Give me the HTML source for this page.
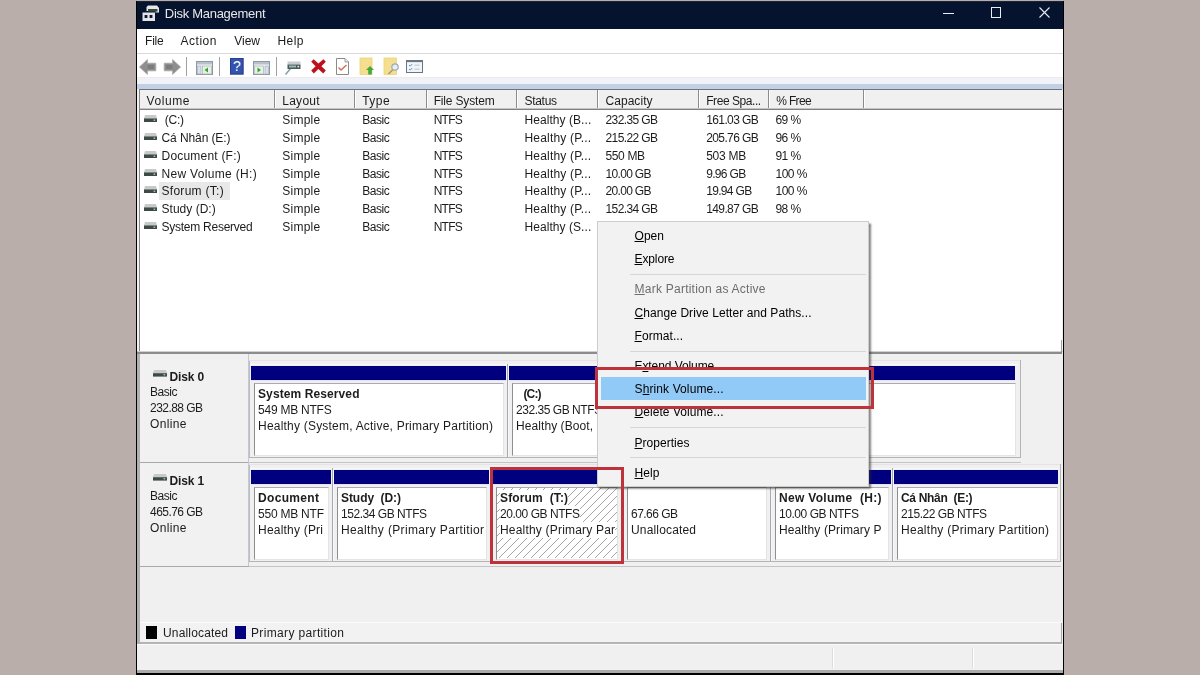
<!DOCTYPE html>
<html><head><meta charset="utf-8"><title>Disk Management</title>
<style>
html,body{margin:0;padding:0;}
body{width:1200px;height:675px;overflow:hidden;background:#b9aeaa;position:relative;font-family:"Liberation Sans",sans-serif;}
.r{position:absolute;}
.tx{position:absolute;left:0;top:0;width:1200px;height:675px;filter:grayscale(1);}
.t{position:absolute;white-space:pre;line-height:16px;height:16px;font-size:12px;color:#1c1c1c;}
.t u{text-decoration:underline;text-decoration-thickness:1px;text-underline-offset:1px;}
svg{position:absolute;overflow:visible;}
</style></head><body>

<div class="r" style="left:136px;top:1px;width:928px;height:674px;background:#000000;"></div>
<div class="r" style="left:137px;top:2px;width:926px;height:27px;background:#05132f;"></div>
<div class="r" style="left:137px;top:1px;width:926px;height:1px;background:#1a2438;"></div>
<div class="r" style="left:137px;top:29px;width:926px;height:24px;background:#ffffff;"></div>
<div class="r" style="left:137px;top:53px;width:926px;height:1px;background:#d9d9d9;"></div>
<div class="r" style="left:137px;top:54px;width:926px;height:24px;background:#ffffff;"></div>
<div class="r" style="left:137px;top:77px;width:926px;height:1px;background:#ececec;"></div>
<div class="r" style="left:137px;top:78px;width:926px;height:6px;background:#f0f2f7;"></div>
<div class="r" style="left:137px;top:84px;width:926px;height:5px;background:#c2d0e4;"></div>
<div class="r" style="left:137px;top:89px;width:926px;height:584px;background:#f0f0f0;"></div>
<svg style="left:142px;top:5px" width="17" height="16" viewBox="0 0 17 16">
<path d="M6 0.5h9l2 2.5v4.5h-3.5v-1.5H4.5V2z" fill="#e4e6e8"/>
<rect x="6" y="4" width="9.5" height="2.6" fill="#36463a"/>
<rect x="0.5" y="7.5" width="12.5" height="8.5" fill="#e2e4e6"/>
<rect x="2.6" y="10" width="2.8" height="3" fill="#0c1836"/>
<rect x="7.6" y="10" width="2.8" height="3" fill="#0c1836"/>
</svg>
<div class="r" style="left:943px;top:13px;width:11px;height:1px;background:#e8ecf4;"></div>
<div class="r" style="left:990.5px;top:7.2px;width:10.5px;height:10.5px;background:transparent;border:1px solid #e8ecf4;box-sizing:border-box;"></div>
<svg style="left:1039px;top:7px" width="11" height="11" viewBox="0 0 11 11"><path d="M0.5 0.5L10.5 10.5M10.5 0.5L0.5 10.5" stroke="#e8ecf4" stroke-width="1.1" fill="none"/></svg>
<svg style="left:139px;top:59px" width="18" height="16" viewBox="0 0 18 16">
<path d="M0.4 8L8.4 0.6V4.2h8.4v7.6H8.4v3.6z" fill="#8e8e8e" stroke="#a8a8a8" stroke-width="0.8"/><path d="M8.6 6h6.4v4H8.6z" fill="#7c7c7c"/></svg>
<svg style="left:163px;top:59px" width="18" height="16" viewBox="0 0 18 16">
<path d="M17.6 8L9.6 0.6V4.2H1.2v7.6h8.4v3.6z" fill="#8e8e8e" stroke="#a8a8a8" stroke-width="0.8"/><path d="M3 6h6.4v4H3z" fill="#7c7c7c"/></svg>
<div class="r" style="left:186px;top:57px;width:1px;height:19px;background:#a0a0a0;"></div>
<div class="r" style="left:219px;top:57px;width:1px;height:19px;background:#a0a0a0;"></div>
<div class="r" style="left:276px;top:57px;width:1px;height:19px;background:#a0a0a0;"></div>
<svg style="left:196px;top:61px" width="17" height="14" viewBox="0 0 17 14">
<rect x="0.5" y="0.5" width="16" height="13" fill="#f4f6f8" stroke="#8e98a4"/>
<rect x="1" y="1" width="15" height="2.5" fill="#b8c0cc"/>
<rect x="1.5" y="5" width="3.5" height="8" fill="#d8e0ea" stroke="#9aa6b4" stroke-width="0.6"/>
<rect x="6.5" y="5" width="9" height="8" fill="#e6f2e2" stroke="#9aa6b4" stroke-width="0.6"/>
<path d="M12 6.5v5L8.5 9z" fill="#3aa035"/></svg>
<svg style="left:230px;top:58px" width="14" height="17" viewBox="0 0 14 17">
<rect x="0" y="0" width="13.5" height="16.5" fill="#3453ae"/>
<rect x="0.5" y="0.5" width="12.5" height="15.5" fill="none" stroke="#27408c" stroke-width="1"/>
<text x="6.8" y="13.2" font-family="Liberation Sans" font-size="14" fill="#fff" text-anchor="middle">?</text></svg>
<svg style="left:253px;top:61px" width="17" height="14" viewBox="0 0 17 14">
<rect x="0.5" y="0.5" width="16" height="13" fill="#f4f6f8" stroke="#8e98a4"/>
<rect x="1" y="1" width="15" height="2.5" fill="#b8c0cc"/>
<rect x="1.5" y="5" width="9" height="8" fill="#e6f2e2" stroke="#9aa6b4" stroke-width="0.6"/>
<rect x="12" y="5" width="3.5" height="8" fill="#d8e0ea" stroke="#9aa6b4" stroke-width="0.6"/>
<path d="M4.5 6.5v5L8 9z" fill="#3aa035"/></svg>
<svg style="left:285px;top:60px" width="16" height="15" viewBox="0 0 16 15">
<path d="M0.5 14.5L6 8" stroke="#8aa0b0" stroke-width="1.6" fill="none"/>
<rect x="2.5" y="1.5" width="13" height="3" fill="#c8ccd0"/>
<rect x="2.5" y="4.5" width="13" height="4.5" fill="#4a5a58"/>
<rect x="4" y="5.5" width="7" height="2" fill="#9ab8b0"/>
<rect x="12.5" y="5.8" width="1.6" height="1.6" fill="#e8f0e8"/></svg>
<svg style="left:310.5px;top:59px" width="15" height="15" viewBox="0 0 15 15">
<path d="M2.6 0.2L7.4 4.4L12.4 0.2L14.8 2.8L10.4 7.2L14.8 11.6L12.2 14.4L7.4 10L2.8 14.4L0.2 11.6L4.6 7.2L0.2 2.8z" fill="#bc121c"/></svg>
<svg style="left:336px;top:58px" width="13" height="17" viewBox="0 0 13 17">
<path d="M0.5 0.5h8.5l3.5 3.5v12.5h-12z" fill="#fff" stroke="#8a8a8a"/>
<path d="M9 0.5v3.5h3.5" fill="#e8e8e8" stroke="#8a8a8a" stroke-width="0.8"/>
<path d="M2.5 9.5l2.5 2.5l5.5-5" fill="none" stroke="#d66a50" stroke-width="1.4"/></svg>
<svg style="left:360px;top:58px" width="14" height="17" viewBox="0 0 14 17">
<rect x="0" y="0" width="12" height="16.5" fill="#f5df8e"/>
<rect x="0" y="0" width="12" height="16.5" fill="none" stroke="#ecd27a" stroke-width="0.8"/>
<path d="M10 8l4 4h-2.2v4.5h-3.6V12H6z" fill="#46a83c"/></svg>
<svg style="left:384px;top:58px" width="15" height="17" viewBox="0 0 15 17">
<rect x="0" y="0" width="12.5" height="16.5" fill="#f5df8e"/>
<rect x="0" y="0" width="12.5" height="16.5" fill="none" stroke="#ecd27a" stroke-width="0.8"/>
<path d="M4.5 16l4.5-4.5" stroke="#a89878" stroke-width="1.6"/>
<circle cx="11" cy="9" r="3.2" fill="#e4eef4" stroke="#9aa8b0" stroke-width="1.2"/></svg>
<svg style="left:406px;top:60px" width="17" height="13" viewBox="0 0 17 13">
<rect x="0.5" y="0.5" width="16" height="12" fill="#f2f5f8" stroke="#6a7684"/>
<rect x="0.5" y="0.5" width="16" height="1.6" fill="#6a7684"/>
<path d="M3 5l1.2 1.2L6.2 4M3 9l1.2 1.2L6.2 8" stroke="#6a94c0" stroke-width="1" fill="none"/>
<path d="M8.5 5.2h5M8.5 9.2h5" stroke="#b8c4d0" stroke-width="1"/></svg>
<div class="r" style="left:139px;top:89px;width:923px;height:1px;background:#6e7484;"></div>
<div class="r" style="left:139px;top:90px;width:1px;height:262px;background:#8a8a8a;"></div>
<div class="r" style="left:140px;top:90px;width:922px;height:261px;background:#ffffff;"></div>
<div class="r" style="left:140px;top:90px;width:922px;height:19px;background:#f0f0f0;"></div>
<div class="r" style="left:140px;top:109px;width:922px;height:1px;background:#808080;"></div>
<div class="r" style="left:140px;top:108px;width:922px;height:1px;background:#c4c4c4;"></div>
<div class="r" style="left:274px;top:90px;width:1px;height:18px;background:#8c8c8c;"></div>
<div class="r" style="left:275px;top:90px;width:1px;height:18px;background:#ffffff;"></div>
<div class="r" style="left:354px;top:90px;width:1px;height:18px;background:#8c8c8c;"></div>
<div class="r" style="left:355px;top:90px;width:1px;height:18px;background:#ffffff;"></div>
<div class="r" style="left:426px;top:90px;width:1px;height:18px;background:#8c8c8c;"></div>
<div class="r" style="left:427px;top:90px;width:1px;height:18px;background:#ffffff;"></div>
<div class="r" style="left:516px;top:90px;width:1px;height:18px;background:#8c8c8c;"></div>
<div class="r" style="left:517px;top:90px;width:1px;height:18px;background:#ffffff;"></div>
<div class="r" style="left:597px;top:90px;width:1px;height:18px;background:#8c8c8c;"></div>
<div class="r" style="left:598px;top:90px;width:1px;height:18px;background:#ffffff;"></div>
<div class="r" style="left:698px;top:90px;width:1px;height:18px;background:#8c8c8c;"></div>
<div class="r" style="left:699px;top:90px;width:1px;height:18px;background:#ffffff;"></div>
<div class="r" style="left:768px;top:90px;width:1px;height:18px;background:#8c8c8c;"></div>
<div class="r" style="left:769px;top:90px;width:1px;height:18px;background:#ffffff;"></div>
<div class="r" style="left:863px;top:90px;width:1px;height:18px;background:#8c8c8c;"></div>
<div class="r" style="left:864px;top:90px;width:1px;height:18px;background:#ffffff;"></div>
<div class="r" style="left:159px;top:182px;width:70.5px;height:17.5px;background:#e8e8e8;"></div>
<svg style="left:144px;top:115.00px" width="13" height="7" viewBox="0 0 13 7"><path d="M1 0h11l1 3.4H0z" fill="#c6caca"/><rect x="0" y="3.4" width="13" height="3.6" fill="#3e4a46"/><rect x="9.6" y="4.6" width="1.6" height="1.2" fill="#b8e0b8"/></svg>
<svg style="left:144px;top:133.00px" width="13" height="7" viewBox="0 0 13 7"><path d="M1 0h11l1 3.4H0z" fill="#c6caca"/><rect x="0" y="3.4" width="13" height="3.6" fill="#3e4a46"/><rect x="9.6" y="4.6" width="1.6" height="1.2" fill="#b8e0b8"/></svg>
<svg style="left:144px;top:151.00px" width="13" height="7" viewBox="0 0 13 7"><path d="M1 0h11l1 3.4H0z" fill="#c6caca"/><rect x="0" y="3.4" width="13" height="3.6" fill="#3e4a46"/><rect x="9.6" y="4.6" width="1.6" height="1.2" fill="#b8e0b8"/></svg>
<svg style="left:144px;top:169.00px" width="13" height="7" viewBox="0 0 13 7"><path d="M1 0h11l1 3.4H0z" fill="#c6caca"/><rect x="0" y="3.4" width="13" height="3.6" fill="#3e4a46"/><rect x="9.6" y="4.6" width="1.6" height="1.2" fill="#b8e0b8"/></svg>
<svg style="left:144px;top:186.00px" width="13" height="7" viewBox="0 0 13 7"><path d="M1 0h11l1 3.4H0z" fill="#c6caca"/><rect x="0" y="3.4" width="13" height="3.6" fill="#3e4a46"/><rect x="9.6" y="4.6" width="1.6" height="1.2" fill="#b8e0b8"/></svg>
<svg style="left:144px;top:204.00px" width="13" height="7" viewBox="0 0 13 7"><path d="M1 0h11l1 3.4H0z" fill="#c6caca"/><rect x="0" y="3.4" width="13" height="3.6" fill="#3e4a46"/><rect x="9.6" y="4.6" width="1.6" height="1.2" fill="#b8e0b8"/></svg>
<svg style="left:144px;top:222.00px" width="13" height="7" viewBox="0 0 13 7"><path d="M1 0h11l1 3.4H0z" fill="#c6caca"/><rect x="0" y="3.4" width="13" height="3.6" fill="#3e4a46"/><rect x="9.6" y="4.6" width="1.6" height="1.2" fill="#b8e0b8"/></svg>
<div class="r" style="left:137px;top:351px;width:926px;height:1px;background:#d0d0d0;"></div>
<div class="r" style="left:137px;top:352px;width:925px;height:1.5px;background:#8c8c8c;"></div>
<div class="r" style="left:1061px;top:340px;width:1px;height:12px;background:#a0a0a0;"></div>
<div class="r" style="left:140px;top:359px;width:108px;height:103px;background:#f1f1f1;"></div>
<div class="r" style="left:248px;top:354px;width:1px;height:108px;background:#c8c8c8;"></div>
<div class="r" style="left:140px;top:462px;width:109px;height:1px;background:#a8a8a8;"></div>
<div class="r" style="left:249px;top:462px;width:772px;height:1px;background:#c4c4c4;"></div>
<svg style="left:153px;top:369.8px" width="14" height="7" viewBox="0 0 14 7"><path d="M1 0h12l1 3.2H0z" fill="#c6caca"/><rect x="0" y="3.2" width="14" height="3.4" fill="#3e4a46"/><rect x="10.6" y="4.2" width="1.6" height="1.2" fill="#b8e0b8"/></svg>
<div class="r" style="left:249px;top:360px;width:1px;height:98px;background:#b8bcd0;"></div>
<div class="r" style="left:249px;top:360px;width:771px;height:1px;background:#e4e4e8;"></div>
<div class="r" style="left:250px;top:364px;width:768px;height:1px;background:#f8f8ff;"></div>
<div class="r" style="left:249px;top:457px;width:772px;height:1px;background:#b4b4b4;"></div>
<div class="r" style="left:1020px;top:360px;width:1px;height:98px;background:#b4b4b4;"></div>
<div class="r" style="left:251px;top:366px;width:255px;height:13.5px;background:#00007e;"></div>
<div class="r" style="left:251px;top:379.5px;width:255px;height:1px;background:#e2e2f4;"></div>
<div class="r" style="left:254px;top:383px;width:250px;height:73px;background:#fff;border-left:1px solid #8e8e8e;border-top:1px solid #ababab;border-right:1px solid #e4e4e4;border-bottom:1px solid #e4e4e4;box-sizing:border-box;"></div>
<div class="r" style="left:507px;top:364px;width:1px;height:93px;background:#a8a8b4;"></div>
<div class="r" style="left:508px;top:364px;width:1px;height:93px;background:#f6f6fc;"></div>
<div class="r" style="left:509px;top:366px;width:506px;height:13.5px;background:#00007e;"></div>
<div class="r" style="left:509px;top:379.5px;width:506px;height:1px;background:#e2e2f4;"></div>
<div class="r" style="left:512px;top:383px;width:504px;height:73px;background:#fff;border-left:1px solid #8e8e8e;border-top:1px solid #ababab;border-right:1px solid #e4e4e4;border-bottom:1px solid #e4e4e4;box-sizing:border-box;"></div>
<div class="r" style="left:140px;top:463px;width:108px;height:103px;background:#f1f1f1;"></div>
<div class="r" style="left:248px;top:458px;width:1px;height:108px;background:#c8c8c8;"></div>
<div class="r" style="left:140px;top:566px;width:109px;height:1px;background:#a8a8a8;"></div>
<div class="r" style="left:249px;top:566px;width:812px;height:1px;background:#c4c4c4;"></div>
<svg style="left:153px;top:473.8px" width="14" height="7" viewBox="0 0 14 7"><path d="M1 0h12l1 3.2H0z" fill="#c6caca"/><rect x="0" y="3.2" width="14" height="3.4" fill="#3e4a46"/><rect x="10.6" y="4.2" width="1.6" height="1.2" fill="#b8e0b8"/></svg>
<div class="r" style="left:249px;top:464px;width:1px;height:98px;background:#b8bcd0;"></div>
<div class="r" style="left:249px;top:464px;width:811px;height:1px;background:#e4e4e8;"></div>
<div class="r" style="left:250px;top:468px;width:808px;height:1px;background:#f8f8ff;"></div>
<div class="r" style="left:249px;top:561px;width:812px;height:1px;background:#b4b4b4;"></div>
<div class="r" style="left:1060px;top:464px;width:1px;height:98px;background:#b4b4b4;"></div>
<div class="r" style="left:251px;top:470px;width:79.5px;height:13.5px;background:#00007e;"></div>
<div class="r" style="left:251px;top:483.5px;width:79.5px;height:1px;background:#e2e2f4;"></div>
<div class="r" style="left:254px;top:487px;width:74.5px;height:73px;background:#fff;border-left:1px solid #8e8e8e;border-top:1px solid #ababab;border-right:1px solid #e4e4e4;border-bottom:1px solid #e4e4e4;box-sizing:border-box;"></div>
<div class="r" style="left:332px;top:468px;width:1px;height:93px;background:#a8a8b4;"></div>
<div class="r" style="left:333px;top:468px;width:1px;height:93px;background:#f6f6fc;"></div>
<div class="r" style="left:334px;top:470px;width:155px;height:13.5px;background:#00007e;"></div>
<div class="r" style="left:334px;top:483.5px;width:155px;height:1px;background:#e2e2f4;"></div>
<div class="r" style="left:337px;top:487px;width:150px;height:73px;background:#fff;border-left:1px solid #8e8e8e;border-top:1px solid #ababab;border-right:1px solid #e4e4e4;border-bottom:1px solid #e4e4e4;box-sizing:border-box;"></div>
<div class="r" style="left:491px;top:468px;width:1px;height:93px;background:#a8a8b4;"></div>
<div class="r" style="left:492px;top:468px;width:1px;height:93px;background:#f6f6fc;"></div>
<div class="r" style="left:493px;top:470px;width:127px;height:13.5px;background:#00007e;"></div>
<div class="r" style="left:493px;top:483.5px;width:127px;height:1px;background:#e2e2f4;"></div>
<div class="r" style="left:496px;top:487px;width:122px;height:73px;background:#fff;border-left:1px solid #8e8e8e;border-top:1px solid #ababab;border-right:1px solid #e4e4e4;border-bottom:1px solid #e4e4e4;box-sizing:border-box;"></div>
<svg style="left:497px;top:488px" width="120" height="70" viewBox="0 0 120 70"><defs><pattern id="h" width="8" height="8" patternUnits="userSpaceOnUse"><path d="M-1 9L9 -1M-5 5L5 -5M3 13L13 3" stroke="#9c9c9c" stroke-width="0.9"/></pattern></defs><rect width="120" height="70" fill="url(#h)"/></svg>
<div class="r" style="left:622px;top:468px;width:1px;height:93px;background:#a8a8b4;"></div>
<div class="r" style="left:623px;top:468px;width:1px;height:93px;background:#f6f6fc;"></div>
<div class="r" style="left:627px;top:487px;width:140px;height:73px;background:#fff;border-left:1px solid #8e8e8e;border-top:1px solid #ababab;border-right:1px solid #e4e4e4;border-bottom:1px solid #e4e4e4;box-sizing:border-box;"></div>
<div class="r" style="left:770px;top:468px;width:1px;height:93px;background:#a8a8b4;"></div>
<div class="r" style="left:771px;top:468px;width:1px;height:93px;background:#f6f6fc;"></div>
<div class="r" style="left:772px;top:470px;width:118.5px;height:13.5px;background:#00007e;"></div>
<div class="r" style="left:772px;top:483.5px;width:118.5px;height:1px;background:#e2e2f4;"></div>
<div class="r" style="left:775px;top:487px;width:113.5px;height:73px;background:#fff;border-left:1px solid #8e8e8e;border-top:1px solid #ababab;border-right:1px solid #e4e4e4;border-bottom:1px solid #e4e4e4;box-sizing:border-box;"></div>
<div class="r" style="left:892px;top:468px;width:1px;height:93px;background:#a8a8b4;"></div>
<div class="r" style="left:893px;top:468px;width:1px;height:93px;background:#f6f6fc;"></div>
<div class="r" style="left:894px;top:470px;width:164px;height:13.5px;background:#00007e;"></div>
<div class="r" style="left:894px;top:483.5px;width:164px;height:1px;background:#e2e2f4;"></div>
<div class="r" style="left:897px;top:487px;width:161px;height:73px;background:#fff;border-left:1px solid #8e8e8e;border-top:1px solid #ababab;border-right:1px solid #e4e4e4;border-bottom:1px solid #e4e4e4;box-sizing:border-box;"></div>
<div class="r" style="left:137px;top:353.5px;width:3px;height:290px;background:#b0b0b0;"></div>
<div class="r" style="left:140px;top:622px;width:922px;height:1px;background:#fafafa;"></div>
<div class="r" style="left:140px;top:623px;width:922px;height:19px;background:#f2f2f2;"></div>
<div class="r" style="left:140px;top:642px;width:922px;height:2px;background:#b4b4b4;"></div>
<div class="r" style="left:1061px;top:623px;width:1px;height:20px;background:#a8a8a8;"></div>
<div class="r" style="left:146px;top:626px;width:11px;height:13px;background:#000;"></div>
<div class="r" style="left:234.5px;top:626px;width:11px;height:13px;background:#00007e;"></div>
<div class="r" style="left:137px;top:644px;width:926px;height:26px;background:#f0f0f0;"></div>
<div class="r" style="left:137px;top:644px;width:926px;height:1px;background:#fafafa;"></div>
<div class="r" style="left:832px;top:648px;width:1px;height:20px;background:#dcdcdc;"></div>
<div class="r" style="left:833px;top:648px;width:1px;height:20px;background:#fff;"></div>
<div class="r" style="left:972px;top:648px;width:1px;height:20px;background:#dcdcdc;"></div>
<div class="r" style="left:973px;top:648px;width:1px;height:20px;background:#fff;"></div>
<div class="r" style="left:137px;top:670px;width:926px;height:3px;background:#ababab;"></div>
<div class="tx">
<span class="t" style="left:164.80px;top:5.70px;font-size:13px;letter-spacing:-0.291px;color:#e4e8f0;">Disk Management</span>
<span class="t" style="left:145.10px;top:33.00px;letter-spacing:-0.273px;">File</span>
<span class="t" style="left:180.50px;top:33.00px;letter-spacing:0.528px;">Action</span>
<span class="t" style="left:234.20px;top:33.00px;">View</span>
<span class="t" style="left:277.50px;top:33.00px;letter-spacing:0.447px;">Help</span>
<span class="t" style="left:146.50px;top:92.50px;letter-spacing:0.596px;">Volume</span>
<span class="t" style="left:282.20px;top:92.50px;letter-spacing:0.288px;">Layout</span>
<span class="t" style="left:362.20px;top:92.50px;letter-spacing:0.487px;">Type</span>
<span class="t" style="left:433.70px;top:92.50px;letter-spacing:-0.170px;">File System</span>
<span class="t" style="left:524.50px;top:92.50px;letter-spacing:-0.304px;">Status</span>
<span class="t" style="left:605.50px;top:92.50px;letter-spacing:0.046px;">Capacity</span>
<span class="t" style="left:706.20px;top:92.50px;letter-spacing:-0.434px;">Free Spa...</span>
<span class="t" style="left:776.20px;top:92.50px;letter-spacing:-0.640px;">% Free</span>
<span class="t" style="left:164.70px;top:112.00px;letter-spacing:-0.227px;">(C:)</span>
<span class="t" style="left:282.20px;top:112.00px;letter-spacing:0.268px;">Simple</span>
<span class="t" style="left:362.20px;top:112.00px;letter-spacing:-0.460px;">Basic</span>
<span class="t" style="left:433.70px;top:112.00px;letter-spacing:-0.773px;">NTFS</span>
<span class="t" style="left:524.50px;top:112.00px;letter-spacing:0.058px;">Healthy (B...</span>
<span class="t" style="left:605.50px;top:112.00px;letter-spacing:-0.607px;">232.35 GB</span>
<span class="t" style="left:706.20px;top:112.00px;letter-spacing:-0.607px;">161.03 GB</span>
<span class="t" style="left:775.50px;top:112.00px;letter-spacing:-0.553px;">69 %</span>
<span class="t" style="left:161.50px;top:130.00px;letter-spacing:-0.093px;">Cá Nhân (E:)</span>
<span class="t" style="left:282.20px;top:130.00px;letter-spacing:0.268px;">Simple</span>
<span class="t" style="left:362.20px;top:130.00px;letter-spacing:-0.460px;">Basic</span>
<span class="t" style="left:433.70px;top:130.00px;letter-spacing:-0.773px;">NTFS</span>
<span class="t" style="left:524.50px;top:130.00px;letter-spacing:0.183px;">Healthy (P...</span>
<span class="t" style="left:605.50px;top:130.00px;letter-spacing:-0.607px;">215.22 GB</span>
<span class="t" style="left:706.20px;top:130.00px;letter-spacing:-0.607px;">205.76 GB</span>
<span class="t" style="left:775.50px;top:130.00px;letter-spacing:-0.553px;">96 %</span>
<span class="t" style="left:161.50px;top:148.00px;letter-spacing:0.210px;">Document (F:)</span>
<span class="t" style="left:282.20px;top:148.00px;letter-spacing:0.268px;">Simple</span>
<span class="t" style="left:362.20px;top:148.00px;letter-spacing:-0.460px;">Basic</span>
<span class="t" style="left:433.70px;top:148.00px;letter-spacing:-0.773px;">NTFS</span>
<span class="t" style="left:524.50px;top:148.00px;letter-spacing:0.183px;">Healthy (P...</span>
<span class="t" style="left:605.50px;top:148.00px;letter-spacing:-0.368px;">550 MB</span>
<span class="t" style="left:706.20px;top:148.00px;letter-spacing:-0.268px;">503 MB</span>
<span class="t" style="left:775.50px;top:148.00px;letter-spacing:-0.553px;">91 %</span>
<span class="t" style="left:161.50px;top:166.00px;letter-spacing:0.320px;">New Volume (H:)</span>
<span class="t" style="left:282.20px;top:166.00px;letter-spacing:0.268px;">Simple</span>
<span class="t" style="left:362.20px;top:166.00px;letter-spacing:-0.460px;">Basic</span>
<span class="t" style="left:433.70px;top:166.00px;letter-spacing:-0.773px;">NTFS</span>
<span class="t" style="left:524.50px;top:166.00px;letter-spacing:0.183px;">Healthy (P...</span>
<span class="t" style="left:605.50px;top:166.00px;letter-spacing:-0.671px;">10.00 GB</span>
<span class="t" style="left:706.20px;top:166.00px;letter-spacing:-0.673px;">9.96 GB</span>
<span class="t" style="left:775.50px;top:166.00px;letter-spacing:-0.505px;">100 %</span>
<span class="t" style="left:161.50px;top:183.00px;letter-spacing:0.286px;">Sforum (T:)</span>
<span class="t" style="left:282.20px;top:183.00px;letter-spacing:0.268px;">Simple</span>
<span class="t" style="left:362.20px;top:183.00px;letter-spacing:-0.460px;">Basic</span>
<span class="t" style="left:433.70px;top:183.00px;letter-spacing:-0.773px;">NTFS</span>
<span class="t" style="left:524.50px;top:183.00px;letter-spacing:0.183px;">Healthy (P...</span>
<span class="t" style="left:605.50px;top:183.00px;letter-spacing:-0.671px;">20.00 GB</span>
<span class="t" style="left:706.20px;top:183.00px;letter-spacing:-0.671px;">19.94 GB</span>
<span class="t" style="left:775.50px;top:183.00px;letter-spacing:-0.505px;">100 %</span>
<span class="t" style="left:161.50px;top:201.00px;letter-spacing:0.022px;">Study (D:)</span>
<span class="t" style="left:282.20px;top:201.00px;letter-spacing:0.268px;">Simple</span>
<span class="t" style="left:362.20px;top:201.00px;letter-spacing:-0.460px;">Basic</span>
<span class="t" style="left:433.70px;top:201.00px;letter-spacing:-0.773px;">NTFS</span>
<span class="t" style="left:524.50px;top:201.00px;letter-spacing:0.183px;">Healthy (P...</span>
<span class="t" style="left:605.50px;top:201.00px;letter-spacing:-0.607px;">152.34 GB</span>
<span class="t" style="left:706.20px;top:201.00px;letter-spacing:-0.607px;">149.87 GB</span>
<span class="t" style="left:775.50px;top:201.00px;letter-spacing:-0.553px;">98 %</span>
<span class="t" style="left:161.50px;top:219.00px;letter-spacing:-0.249px;">System Reserved</span>
<span class="t" style="left:282.20px;top:219.00px;letter-spacing:0.268px;">Simple</span>
<span class="t" style="left:362.20px;top:219.00px;letter-spacing:-0.460px;">Basic</span>
<span class="t" style="left:433.70px;top:219.00px;letter-spacing:-0.773px;">NTFS</span>
<span class="t" style="left:524.50px;top:219.00px;letter-spacing:0.058px;">Healthy (S...</span>
<span class="t" style="left:169.60px;top:368.50px;letter-spacing:-0.148px;font-weight:bold;">Disk 0</span>
<span class="t" style="left:150.00px;top:384.10px;letter-spacing:-0.460px;">Basic</span>
<span class="t" style="left:150.00px;top:399.80px;letter-spacing:-0.545px;">232.88 GB</span>
<span class="t" style="left:150.00px;top:415.50px;letter-spacing:0.364px;">Online</span>
<span class="t" style="left:258.00px;top:386.30px;letter-spacing:0.101px;font-weight:bold;">System Reserved</span>
<span class="t" style="left:258.00px;top:402.05px;letter-spacing:-0.232px;">549 MB NTFS</span>
<span class="t" style="left:258.00px;top:417.80px;letter-spacing:0.212px;">Healthy (System, Active, Primary Partition)</span>
<span class="t" style="left:523.50px;top:386.30px;letter-spacing:-0.880px;font-weight:bold;">(C:)</span>
<span class="t" style="left:516.00px;top:402.05px;letter-spacing:-0.465px;">232.35 GB NTFS</span>
<span class="t" style="left:516.00px;top:417.80px;letter-spacing:0.075px;">Healthy (Boot,</span>
<span class="t" style="left:169.60px;top:472.50px;letter-spacing:-0.148px;font-weight:bold;">Disk 1</span>
<span class="t" style="left:150.00px;top:488.10px;letter-spacing:-0.460px;">Basic</span>
<span class="t" style="left:150.00px;top:503.80px;letter-spacing:-0.545px;">465.76 GB</span>
<span class="t" style="left:150.00px;top:519.50px;letter-spacing:0.364px;">Online</span>
<span class="t" style="left:258.00px;top:490.30px;letter-spacing:0.331px;font-weight:bold;">Document</span>
<span class="t" style="left:258.00px;top:506.05px;letter-spacing:-0.227px;">550 MB NTF</span>
<span class="t" style="left:258.00px;top:521.80px;letter-spacing:0.209px;">Healthy (Pri</span>
<span class="t" style="left:341.00px;top:490.30px;letter-spacing:-0.066px;font-weight:bold;">Study  (D:)</span>
<span class="t" style="left:341.00px;top:506.05px;letter-spacing:-0.465px;">152.34 GB NTFS</span>
<span class="t" style="left:341.00px;top:521.80px;letter-spacing:0.358px;">Healthy (Primary Partitior</span>
<span class="t" style="left:500.00px;top:490.30px;letter-spacing:0.122px;font-weight:bold;background:#fff;">Sforum  (T:)</span>
<span class="t" style="left:500.00px;top:506.05px;letter-spacing:-0.448px;background:#fff;">20.00 GB NTFS</span>
<span class="t" style="left:500.00px;top:521.80px;letter-spacing:0.192px;background:#fff;">Healthy (Primary Par</span>
<span class="t" style="left:631.00px;top:506.05px;letter-spacing:-0.529px;">67.66 GB</span>
<span class="t" style="left:631.00px;top:521.80px;letter-spacing:0.164px;">Unallocated</span>
<span class="t" style="left:779.00px;top:490.30px;letter-spacing:0.313px;font-weight:bold;">New Volume  (H:)</span>
<span class="t" style="left:779.00px;top:506.05px;letter-spacing:-0.448px;">10.00 GB NTFS</span>
<span class="t" style="left:779.00px;top:521.80px;letter-spacing:0.107px;">Healthy (Primary P</span>
<span class="t" style="left:901.00px;top:490.30px;letter-spacing:-0.313px;font-weight:bold;">Cá Nhân  (E:)</span>
<span class="t" style="left:901.00px;top:506.05px;letter-spacing:-0.465px;">215.22 GB NTFS</span>
<span class="t" style="left:901.00px;top:521.80px;letter-spacing:0.281px;">Healthy (Primary Partition)</span>
<span class="t" style="left:163.00px;top:624.70px;letter-spacing:0.164px;">Unallocated</span>
<span class="t" style="left:251.00px;top:624.70px;letter-spacing:0.353px;">Primary partition</span>
</div>
<div class="r" style="left:597px;top:221px;width:272px;height:266px;background:#f2f2f2;border:1px solid #cdcdcd;box-sizing:border-box;box-shadow:2px 2.5px 1.8px -0.3px rgba(40,40,40,0.62);"></div>
<div class="r" style="left:630px;top:273.5px;width:236px;height:1px;background:#d6d6d6;"></div>
<div class="r" style="left:630px;top:350.5px;width:236px;height:1px;background:#d6d6d6;"></div>
<div class="r" style="left:630px;top:426.5px;width:236px;height:1px;background:#d6d6d6;"></div>
<div class="r" style="left:630px;top:457px;width:236px;height:1px;background:#d6d6d6;"></div>
<div class="r" style="left:600.5px;top:377px;width:265px;height:23px;background:#91c9f7;"></div>
<div class="tx">
<span class="t" style="left:634.50px;top:228.00px;letter-spacing:0.053px;color:#000;"><u>O</u>pen</span>
<span class="t" style="left:634.50px;top:251.00px;letter-spacing:-0.113px;color:#000;"><u>E</u>xplore</span>
<span class="t" style="left:634.50px;top:281.00px;letter-spacing:0.243px;color:#6d6d6d;"><u>M</u>ark Partition as Active</span>
<span class="t" style="left:634.50px;top:304.50px;letter-spacing:0.072px;color:#000;"><u>C</u>hange Drive Letter and Paths...</span>
<span class="t" style="left:634.50px;top:328.00px;letter-spacing:0.062px;color:#000;"><u>F</u>ormat...</span>
<span class="t" style="left:634.50px;top:358.00px;letter-spacing:-0.081px;color:#000;">E<u>x</u>tend Volume...</span>
<span class="t" style="left:634.50px;top:381.00px;letter-spacing:0.109px;color:#000;">S<u>h</u>rink Volume...</span>
<span class="t" style="left:634.50px;top:404.00px;letter-spacing:0.061px;color:#000;"><u>D</u>elete Volume...</span>
<span class="t" style="left:634.50px;top:435.00px;letter-spacing:0.031px;color:#000;"><u>P</u>roperties</span>
<span class="t" style="left:634.50px;top:465.00px;letter-spacing:0.113px;color:#000;"><u>H</u>elp</span>
</div>
<div class="r" style="left:490px;top:467px;width:133.5px;height:96.5px;background:transparent;border:3.5px solid #bd323b;box-sizing:border-box;"></div>
<div class="r" style="left:595px;top:367px;width:279px;height:42px;background:transparent;border:3px solid #bd323b;box-sizing:border-box;"></div>
</body></html>
